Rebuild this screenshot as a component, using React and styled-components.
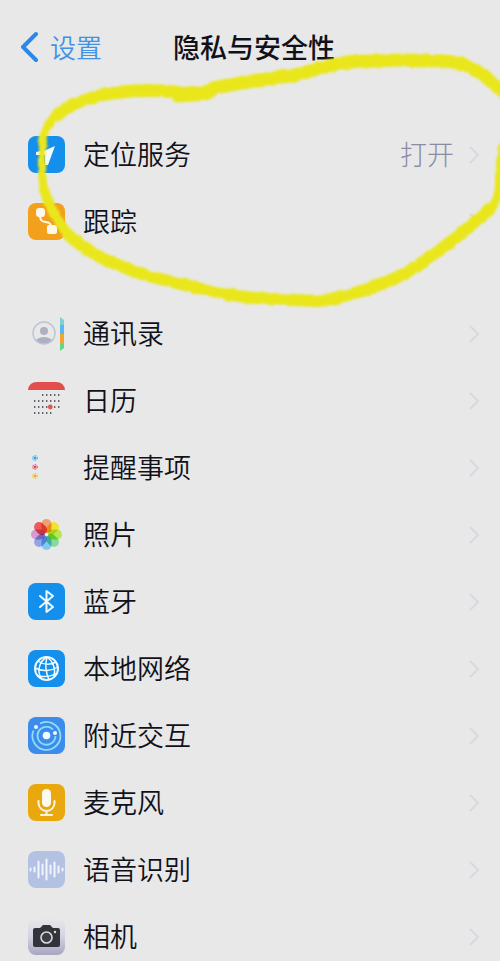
import React from 'react';
import styled, { createGlobalStyle } from 'styled-components';

const GlobalStyle = createGlobalStyle`
    body {
        margin: 0;
        background: #e8e8e8;
        font-family: "Noto Sans CJK SC", "Noto Sans", sans-serif;
    }
`;

const LocationIcon = () => (
    <Icon viewBox="0 0 37 37">
        <rect width="37" height="37" rx="8" fill="#148fec" />
        <path d="M27 10 L18 14 L8 16 V19 L17 19 L17 29 H20 Z" fill="#f4fbff" />
    </Icon>
);

const TrackingIcon = () => (
    <Icon viewBox="0 0 37 37">
        <rect width="37" height="37" rx="8" fill="#f3a01c" />
        <path d="M12 12 C12 24 22 14 24 25" fill="none" stroke="#fff8ea" strokeWidth="2" />
        <rect x="8" y="5" width="9" height="9" rx="3" fill="#fff8ea" />
        <rect x="19" y="22" width="10" height="9" rx="2" fill="#fff8ea" />
    </Icon>
);

const ContactsIcon = () => (
    <Icon viewBox="0 0 37 37">
        <clipPath id="face"><circle cx="16" cy="18" r="11" /></clipPath>
        <g clipPath="url(#face)" fill="#adb0c0">
            <circle cx="16" cy="16" r="4" />
            <ellipse cx="16" cy="28" rx="9" ry="6" />
        </g>
        <circle cx="16" cy="18" r="11" fill="none" stroke="#bcc3d2" strokeWidth="1.4" />
        <path d="M32 2 L36 5 V11 H32 Z" fill="#7fd0d4" />
        <path d="M32 10 H36 V19 H32 Z" fill="#56b9f2" />
        <path d="M32 19 H36 V29 H32 Z" fill="#f0a431" />
        <path d="M32 29 H36 V33 L32 36 Z" fill="#63d585" />
    </Icon>
);

const calendarRows = [
    [13, 14, 5],
    [19, 6, 7],
    [25, 6, 7],
    [31, 6, 5],
];

const CalendarIcon = () => (
    <Icon viewBox="0 0 37 37">
        <path d="M0 8 Q1 0 9 0 H28 Q36 0 37 8 Z" fill="#e24f4b" />
        {calendarRows.map(([y, x, count]) => (
            <path
                key={y}
                d={`M${x} ${y} h${count * 4 - 2}`}
                stroke="#33343c"
                strokeWidth="1.4"
                strokeDasharray="1.4 2.6"
            />
        ))}
        <circle cx="22.3" cy="25" r="2.4" fill="#df5753" />
    </Icon>
);

const reminders = [
    [9, '#3d9bea', '#bfe3f7'],
    [18, '#d9476b', '#f3c9d3'],
    [27, '#e3ad3c', '#f5e4b8'],
];

const RemindersIcon = () => (
    <Icon viewBox="0 0 37 37">
        {reminders.map(([y, dot, halo]) => (
            <g key={y}>
                <circle cx="7" cy={y} r="3" fill={halo} />
                <circle cx="7" cy={y} r="2.3" fill="none" stroke={dot} strokeWidth="1" strokeDasharray="1.2 1.2" />
                <circle cx="7" cy={y} r="1.3" fill={dot} />
            </g>
        ))}
    </Icon>
);

const petals = ['#f0a070', '#f5e136', '#b4ea50', '#84dc9c', '#84c8f2', '#8ea6e6', '#d49ad4', '#ee5858'];

const PhotosIcon = () => (
    <Icon viewBox="0 0 37 37">
        {petals.map((color, i) => (
            <rect
                key={color}
                x="13.5"
                y="3"
                width="10"
                height="14"
                rx="5"
                fill={color}
                transform={`rotate(${i * 45} 18.5 18.5)`}
                style={{ mixBlendMode: 'multiply' }}
            />
        ))}
        <circle cx="18.5" cy="18.5" r="1.5" fill="#f4f4f4" />
    </Icon>
);

const BluetoothIcon = () => (
    <Icon viewBox="0 0 37 37">
        <rect width="37" height="37" rx="8" fill="#148fec" />
        <path
            d="M12 13 L25 24 L18.500 29 V8 L25 13 L12 24"
            fill="none"
            stroke="#eefaff"
            strokeWidth="2"
            strokeLinejoin="round"
            strokeLinecap="round"
        />
    </Icon>
);

const NetworkIcon = () => (
    <Icon viewBox="0 0 37 37">
        <rect width="37" height="37" rx="8" fill="#148fec" />
        <g fill="none" stroke="#eefaff" strokeWidth="1.5">
            <circle cx="18.500" cy="18.500" r="11.500" strokeWidth="2" />
            <path d="M19 7 C10 12 9 23 14 29" />
            <path d="M19 7 C17 14 18 23 21 30" />
            <path d="M19 7 C25 11 28 19 26 27" />
            <path d="M10 11 C15 15 23 15 28 12" />
            <path d="M7 18 C14 22 24 21 30 17" />
            <path d="M9 26 C15 27 23 27 29 23" />
        </g>
    </Icon>
);

const NearbyIcon = () => (
    <Icon viewBox="0 0 37 37">
        <rect width="37" height="37" rx="8" fill="#3c8cec" />
        <g fill="none" stroke="#8fdcf8" strokeWidth="1.800">
            <path d="M12 6.500 A14 14 0 1 1 5.500 13.500" />
            <path d="M25 12.500 A9 9 0 1 0 27.500 19" />
        </g>
        <circle cx="18.500" cy="18.500" r="3.800" fill="#f2fcff" />
        <circle cx="8" cy="10" r="2" fill="#f2fcff" />
        <circle cx="27" cy="16" r="2" fill="#f2fcff" />
    </Icon>
);

const MicrophoneIcon = () => (
    <Icon viewBox="0 0 37 37">
        <rect width="37" height="37" rx="8" fill="#eaa80f" />
        <rect x="14" y="5" width="9" height="18" rx="4.500" fill="#fffaf0" />
        <path
            d="M10.500 17 V19 A8 8 0 0 0 26.500 19 V17 M18.500 27 V30 M13 31 H24"
            fill="none"
            stroke="#fff4dc"
            strokeWidth="2"
            strokeLinecap="round"
        />
    </Icon>
);

const waveBars = [1, 2, 8, 5, 10, 4, 7, 3, 1];

const SpeechIcon = () => (
    <Icon viewBox="0 0 37 37">
        <rect width="37" height="37" rx="8" fill="#b3c1e2" />
        {waveBars.map((h, i) => (
            <path
                key={i}
                d={`M${2.5 + i * 4} ${18.5 - h} v${h * 2}`}
                stroke="#f0f4ff"
                strokeWidth="2"
                strokeLinecap="round"
            />
        ))}
    </Icon>
);

const CameraIcon = () => (
    <Icon viewBox="0 0 37 37">
        <linearGradient id="body" x1="0" y1="0" x2="0" y2="1">
            <stop offset="0" stopColor="#e8e8e8" />
            <stop offset="0.500" stopColor="#d3d3e2" />
            <stop offset="1" stopColor="#a5a5c0" />
        </linearGradient>
        <rect width="37" height="37" rx="8" fill="url(#body)" />
        <path d="M7 10 H12 L15 7 H22 L25 10 H30 Q32 10 32 12 V27 Q32 29 30 29 H7 Q5 29 5 27 V12 Q5 10 7 10 Z" fill="#33333b" />
        <circle cx="18.500" cy="19.500" r="5.500" fill="#3d3d46" stroke="#d8d8de" strokeWidth="1.600" />
        <circle cx="27" cy="14" r="1.200" fill="#e6e0c4" />
    </Icon>
);

const groups = [
    [
        { name: '定位服务', icon: LocationIcon, value: '打开' },
        { name: '跟踪', icon: TrackingIcon },
    ],
    [
        { name: '通讯录', icon: ContactsIcon },
        { name: '日历', icon: CalendarIcon },
        { name: '提醒事项', icon: RemindersIcon },
        { name: '照片', icon: PhotosIcon },
        { name: '蓝牙', icon: BluetoothIcon },
        { name: '本地网络', icon: NetworkIcon },
        { name: '附近交互', icon: NearbyIcon },
        { name: '麦克风', icon: MicrophoneIcon },
        { name: '语音识别', icon: SpeechIcon },
        { name: '相机', icon: CameraIcon },
    ],
];

const Item = ({ item }) => (
    <li>
        <Row href="#">
            <item.icon />
            <Name>{item.name}</Name>
            {item.value && <Value>{item.value}</Value>}
            <Chevron viewBox="0 0 12 20">
                <path d="M2 2 L10 10 L2 18" />
            </Chevron>
        </Row>
    </li>
);

// Hand-drawn marker loop round the first group
const Marker = () => (
    <MarkerLayer viewBox="0 0 500 320" preserveAspectRatio="none" aria-hidden="true">
        <filter id="rough" filterUnits="userSpaceOnUse" x="0" y="0" width="520" height="320">
            <feTurbulence type="fractalNoise" baseFrequency="0.12" numOctaves="2" seed="4" result="noise" />
            <feDisplacementMap in="SourceGraphic" in2="noise" scale="4" xChannelSelector="R" yChannelSelector="G" />
            <feGaussianBlur stdDeviation="0.800" />
        </filter>
        <g filter="url(#rough)">
            <path d="M508 97 Q482 71 463 64 C448 59 430 61 420 61 C400 58 380 62 358 61 C330 63 312 72 290 76 C262 79 240 83 214 88" strokeWidth="13" />
            <path d="M214 88 C206 94 190 93 175 92 C150 89 125 91 105 94" strokeWidth="13" />
            <path d="M178 96 L206 94" strokeWidth="13" />
            <path d="M109 93 C88 98 66 106 56 116" strokeWidth="12" />
            <path d="M58 113 C46 124 42 136 42 155 C42 172 42 182 45 193" strokeWidth="8" />
            <path d="M44 190 C49 206 57 221 68 234" strokeWidth="10" />
            <path d="M66 232 C82 251 115 265 145 275 C180 284 210 292 245 297 C275 300 300 300 320 301" strokeWidth="12" />
            <path d="M316 301 C345 298 372 289 400 276 C430 260 462 233 490 209" strokeWidth="12" />
            <path d="M488 211 Q499 201 499 184 Q499 165 502 148" strokeWidth="8" />
        </g>
    </MarkerLayer>
);

export default () => (
    <Page>
        <GlobalStyle />
        <Header>
            <Back href="#">
                <BackArrow viewBox="0 0 18 32">
                    <path d="M16 3 L3 16 L16 29" />
                </BackArrow>
                设置
            </Back>
            <Title>隐私与安全性</Title>
        </Header>
        <main>
            {groups.map((items, i) => (
                <Group key={i}>
                    {items.map(item => <Item key={item.name} item={item} />)}
                </Group>
            ))}
        </main>
        <Marker />
    </Page>
);

const Page = styled.div`
    position: relative;
    height: 100vh;
    overflow: hidden auto;
    scrollbar-width: none;
    color: #111119;
`;

const Header = styled.header`
    display: grid;
    grid-template-columns: 1fr auto 1fr;
    align-items: center;
    height: 94px;
    padding: 0 12px 0 20px;
`;

const Back = styled.a`
    display: flex;
    align-items: center;
    gap: 12px;
    font-size: 26px;
    font-weight: 350;
    line-height: 38px;
    color: #3f92e6;
    text-decoration: none;
`;

const BackArrow = styled.svg`
    width: 18px;
    height: 32px;
    fill: none;
    stroke: #2b87e8;
    stroke-width: 4;
    stroke-linecap: round;
    stroke-linejoin: round;
`;

const Title = styled.h1`
    margin: 0;
    font-size: 27px;
    font-weight: 500;
    line-height: 40px;
`;

const Group = styled.ul`
    list-style: none;
    margin: 27px 0 45px;
    padding: 0;

    & + & {
        margin-top: 0;
    }
`;

const Row = styled.a`
    display: flex;
    align-items: center;
    height: 67px;
    padding: 0 20px 0 28px;
    color: inherit;
    text-decoration: none;
`;

const Icon = styled.svg`
    flex: none;
    width: 37px;
    height: 37px;
    isolation: isolate;
`;

const Name = styled.span`
    flex: 1;
    margin-left: 18px;
    padding-bottom: 2px;
    font-size: 27px;
    font-weight: 350;
    line-height: 40px;
`;

const Value = styled.span`
    margin-right: 14px;
    padding-bottom: 2px;
    font-size: 27px;
    font-weight: 300;
    line-height: 40px;
    color: #8b8ba4;
`;

const Chevron = styled.svg`
    flex: none;
    width: 12px;
    height: 20px;
    fill: none;
    stroke: #d8d8e0;
    stroke-width: 2;
`;

const MarkerLayer = styled.svg`
    position: absolute;
    top: 0;
    left: 0;
    width: 100%;
    height: 320px;
    pointer-events: none;
    fill: none;
    stroke: #e9e71b;
    stroke-linecap: round;
`;
